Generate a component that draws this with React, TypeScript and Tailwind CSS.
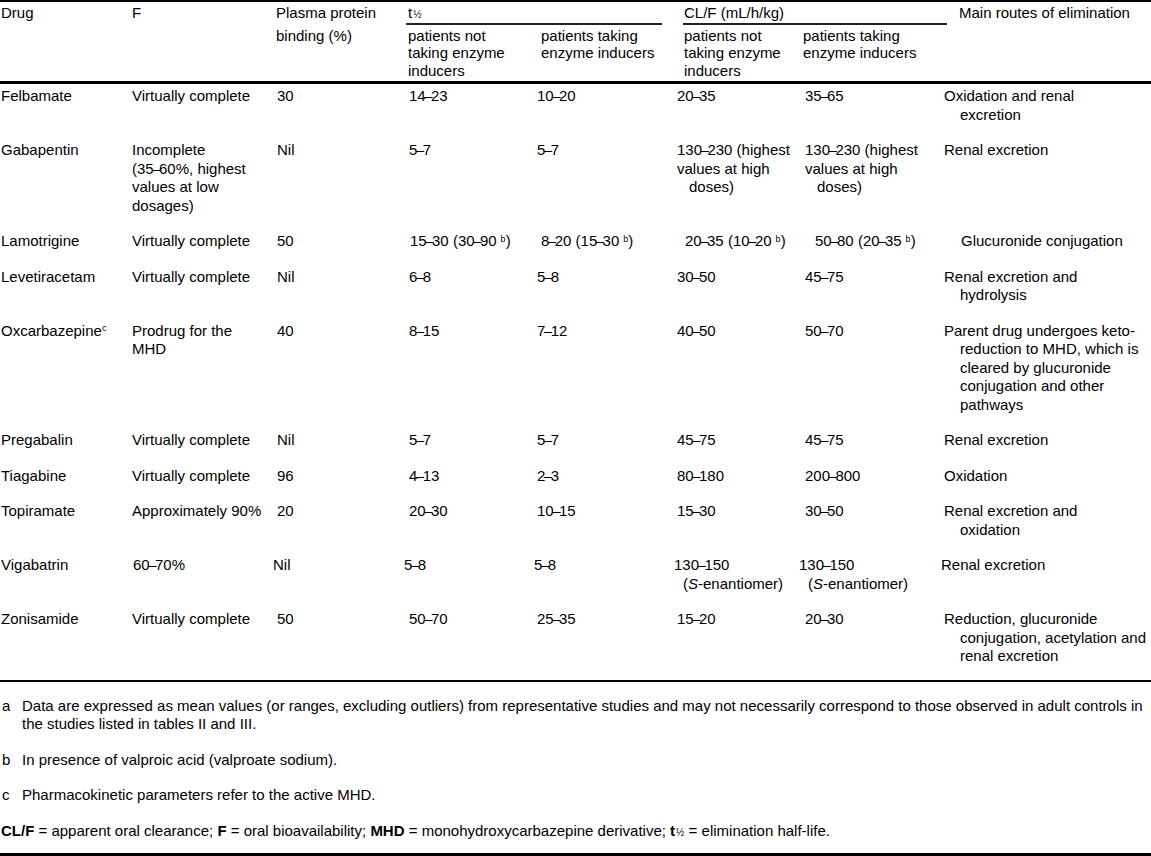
import { Fragment, type ReactNode } from "react";

type Row = {
  drug: ReactNode;
  f: ReactNode[];
  ppb: string;
  t1: ReactNode[];
  t2: ReactNode[];
  cl1: ReactNode[];
  cl2: ReactNode[];
  route: ReactNode[];
  clIndent?: string;
  shift?: string[];
};

// range dashes in the source sit tight against the digits
function dash(node: ReactNode) {
  if (typeof node !== "string") return node;
  const parts = node.split("–");
  return parts.map((p, i) => (
    <Fragment key={i}>
      {i > 0 && <span className="-mx-[1.5px]">–</span>}
      {p}
    </Fragment>
  ));
}

const B = () => <sup className="ml-[4px] text-[9px] leading-none">b</sup>;

const rows: Row[] = [
  {
    drug: "Felbamate",
    f: ["Virtually complete"],
    ppb: "30",
    t1: ["14–23"],
    t2: ["10–20"],
    cl1: ["20–35"],
    cl2: ["35–65"],
    route: ["Oxidation and renal", "excretion"],
  },
  {
    drug: "Gabapentin",
    f: ["Incomplete", "(35–60%, highest", "values at low", "dosages)"],
    ppb: "Nil",
    t1: ["5–7"],
    t2: ["5–7"],
    cl1: ["130–230 (highest", "values at high", <span className="pl-[12px]">doses)</span>],
    cl2: ["130–230 (highest", "values at high", <span className="pl-[12px]">doses)</span>],
    clIndent: "",
    route: ["Renal excretion"],
  },
  {
    drug: "Lamotrigine",
    f: ["Virtually complete"],
    ppb: "50",
    t1: [<>{dash("15–30 (30–90")}<B />)</>],
    t2: [<>{dash("8–20 (15–30")}<B />)</>],
    cl1: [<>{dash("20–35 (10–20")}<B />)</>],
    cl2: [<>{dash("50–80 (20–35")}<B />)</>],
    route: ["Glucuronide conjugation"],
    shift: ["", "", "", "ml-[1px]", "ml-[4px]", "ml-[8px]", "ml-[10px]", "ml-[17px]"],
  },
  {
    drug: "Levetiracetam",
    f: ["Virtually complete"],
    ppb: "Nil",
    t1: ["6–8"],
    t2: ["5–8"],
    cl1: ["30–50"],
    cl2: ["45–75"],
    route: ["Renal excretion and", "hydrolysis"],
  },
  {
    drug: (
      <>
        Oxcarbazepine<sup className="text-[9px] leading-none">c</sup>
      </>
    ),
    f: ["Prodrug for the", "MHD"],
    ppb: "40",
    t1: ["8–15"],
    t2: ["7–12"],
    cl1: ["40–50"],
    cl2: ["50–70"],
    route: [
      "Parent drug undergoes keto-",
      "reduction to MHD, which is",
      "cleared by glucuronide",
      "conjugation and other",
      "pathways",
    ],
  },
  {
    drug: "Pregabalin",
    f: ["Virtually complete"],
    ppb: "Nil",
    t1: ["5–7"],
    t2: ["5–7"],
    cl1: ["45–75"],
    cl2: ["45–75"],
    route: ["Renal excretion"],
  },
  {
    drug: "Tiagabine",
    f: ["Virtually complete"],
    ppb: "96",
    t1: ["4–13"],
    t2: ["2–3"],
    cl1: ["80–180"],
    cl2: ["200–800"],
    route: ["Oxidation"],
  },
  {
    drug: "Topiramate",
    f: ["Approximately 90%"],
    ppb: "20",
    t1: ["20–30"],
    t2: ["10–15"],
    cl1: ["15–30"],
    cl2: ["30–50"],
    route: ["Renal excretion and", "oxidation"],
  },
  {
    drug: "Vigabatrin",
    f: ["60–70%"],
    ppb: "Nil",
    t1: ["5–8"],
    t2: ["5–8"],
    cl1: [
      "130–150",
      <>
        (<i>S</i>-enantiomer)
      </>,
    ],
    cl2: [
      "130–150",
      <>
        (<i>S</i>-enantiomer)
      </>,
    ],
    route: ["Renal excretion"],
    shift: ["", "ml-[1px]", "-ml-[4px]", "-ml-[5px]", "-ml-[3px]", "-ml-[3px]", "-ml-[6px]", "-ml-[3px]"],
  },
  {
    drug: "Zonisamide",
    f: ["Virtually complete"],
    ppb: "50",
    t1: ["50–70"],
    t2: ["25–35"],
    cl1: ["15–20"],
    cl2: ["20–30"],
    route: ["Reduction, glucuronide", "conjugation, acetylation and", "renal excretion"],
  },
];

function Lines({ lines, indent = "" }: { lines: ReactNode[]; indent?: string }) {
  return (
    <>
      {lines.map((line, i) => (
        <div key={i} className={`whitespace-nowrap ${i > 0 ? indent : ""}`}>
          {dash(line)}
        </div>
      ))}
    </>
  );
}

function Half() {
  return <span className="ml-[1px] text-[10px] leading-none">½</span>;
}

export default function App() {
  return (
    <div className="min-h-screen w-[1151px] bg-white font-['Liberation_Sans',Arial,sans-serif] text-[15px] leading-[18.5px] text-black">
      {/* header */}
      <div className="grid grid-cols-[132px_144px_132px_133px_143px_119px_156px_1fr] border-t-2 border-b-[3px] border-black pt-[2px] pb-[2px]">
        <div className="pl-[1px]">Drug</div>
        <div>F</div>
        <div>Plasma protein</div>
        <div className="col-span-2 mr-[22px] -ml-[2px] h-[20.5px] border-b-2 border-[#222] pl-[2px]">
          t<Half />
        </div>
        <div className="col-span-2 mr-[12px] -ml-[1px] h-[20.5px] border-b-2 border-[#222] pl-[1px]">
          CL/F (mL/h/kg)
        </div>
        <div>Main routes of elimination</div>

        <div className="col-start-3 pt-[2px] leading-[17.5px]">binding (%)</div>
        <div className="pt-[2px] leading-[17.5px]">
          patients not
          <br />
          taking enzyme
          <br />
          inducers
        </div>
        <div className="pt-[2px] leading-[17.5px]">
          patients taking
          <br />
          enzyme inducers
        </div>
        <div className="pt-[2px] leading-[17.5px]">
          patients not
          <br />
          taking enzyme
          <br />
          inducers
        </div>
        <div className="pt-[2px] leading-[17.5px]">
          patients taking
          <br />
          enzyme inducers
        </div>
      </div>

      {/* body */}
      <div>
        {rows.map((r, idx) => {
          const s = r.shift ?? [];
          const clIndent = r.clIndent ?? "pl-[9px]";
          return (
            <div
              key={idx}
              className="grid grid-cols-[132px_145px_132px_128px_140px_128px_139px_1fr] pt-[3px] pb-[14px]"
            >
              <div className={`pl-[1px] ${s[0] ?? ""}`}>{r.drug}</div>
              <div className={s[1] ?? ""}>
                <Lines lines={r.f} />
              </div>
              <div className={s[2] ?? ""}>{r.ppb}</div>
              <div className={s[3] ?? ""}>
                <Lines lines={r.t1} />
              </div>
              <div className={s[4] ?? ""}>
                <Lines lines={r.t2} />
              </div>
              <div className={s[5] ?? ""}>
                <Lines lines={r.cl1} indent={clIndent} />
              </div>
              <div className={s[6] ?? ""}>
                <Lines lines={r.cl2} indent={clIndent} />
              </div>
              <div className={s[7] ?? ""}>
                <Lines lines={r.route} indent="pl-[16px]" />
              </div>
            </div>
          );
        })}
      </div>

      {/* footnotes */}
      <div className="flex flex-col gap-[17px] border-t-2 border-b-[3px] border-black pt-[15px] pb-[13px]">
        <div className="flex">
          <div className="w-[22px] shrink-0 pl-[2px]">a</div>
          <div>
            Data are expressed as mean values (or ranges, excluding outliers) from representative studies and may not
            necessarily correspond to those observed in adult controls in
            <br />
            the studies listed in tables II and III.
          </div>
        </div>
        <div className="flex">
          <div className="w-[22px] shrink-0 pl-[2px]">b</div>
          <div>In presence of valproic acid (valproate sodium).</div>
        </div>
        <div className="flex">
          <div className="w-[22px] shrink-0 pl-[2px]">c</div>
          <div>Pharmacokinetic parameters refer to the active MHD.</div>
        </div>
        <div className="pl-[1px]">
          <b>CL/F</b> = apparent oral clearance; <b>F</b> = oral bioavailability; <b>MHD</b> = monohydroxycarbazepine
          derivative; <b>t</b>
          <Half /> = elimination half-life.
        </div>
      </div>
    </div>
  );
}
